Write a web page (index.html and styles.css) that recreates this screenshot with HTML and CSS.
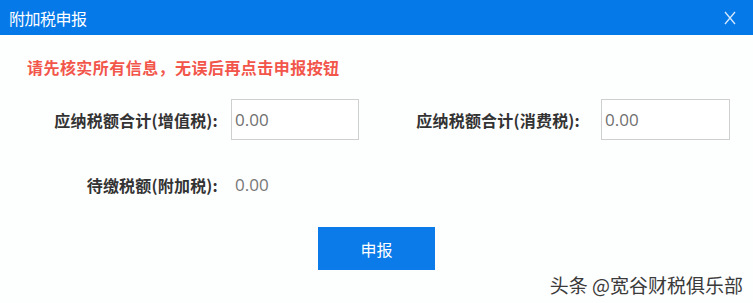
FILE: index.html
```html
<!DOCTYPE html>
<html lang="zh">
<head>
<meta charset="utf-8">
<link rel="stylesheet" href="styles.css">
</head>
<body>
<div class="dialog">
  <div class="header">
    <span class="title">附加税申报</span>
    <svg class="close" width="12" height="14" viewBox="0 0 12 14"><path d="M1 1 L11 13 M11 1 L1 13" stroke="#d4e8ff" stroke-width="1.3" fill="none"/></svg>
  </div>
  <div class="content">
    <div class="notice">请先核实所有信息，无误后再点击申报按钮</div>
    <div class="row">
      <label class="label l1">应纳税额合计(增值税):</label>
      <div class="input i1">0.00</div>
      <label class="label l2">应纳税额合计(消费税):</label>
      <div class="input i2">0.00</div>
    </div>
    <div class="row row2">
      <label class="label l1">待缴税额(附加税):</label>
      <div class="value">0.00</div>
    </div>
    <div class="actions">
      <button class="btn">申报</button>
    </div>
  </div>
  <div class="watermark">头条 @宽谷财税俱乐部</div>
</div>
</body>
</html>
```
FILE: styles.css
```css
* { box-sizing: border-box; }
html, body { margin: 0; padding: 0; background: #fff; }
body {
  width: 753px;
  height: 303px;
  font-family: "Noto Sans CJK SC", "Noto Sans", sans-serif;
  overflow: hidden;
}
.dialog {
  position: relative;
  width: 753px;
  height: 303px;
  background: #fdfefe;
}
.header {
  height: 35px;
  background: #0679e8;
  display: flex;
  align-items: center;
  justify-content: space-between;
  padding: 0 17px 0 9px;
}
.title {
  color: #fff;
  font-size: 16px;
  line-height: 20px;
  letter-spacing: -0.5px;
}
.close { display: block; margin-top: 1px; }
.notice {
  margin: 21px 0 0 27px;
  color: #f2564b;
  font-size: 16px;
  font-weight: 700;
  line-height: 22px;
  letter-spacing: 0.45px;
}
.row {
  display: flex;
  align-items: center;
  margin-top: 21px;
  height: 41px;
}
.label {
  color: #333;
  font-size: 16px;
  font-weight: 700;
  line-height: 22px;
  text-align: right;
  white-space: nowrap;
  letter-spacing: 0.2px;
}
.l1 { width: 218px; margin-right: 13px; }
.l2 { width: 221px; margin-right: 21px; margin-left: 0; }
.input {
  height: 41px;
  border: 1px solid #cfcfcf;
  background: #fff;
  color: #6f6f6f;
  font-family: "Open Sans", "Noto Sans", sans-serif;
  font-size: 17px;
  line-height: 39px;
  padding-left: 3px;
}
.i1 { width: 128px; }
.i2 { width: 129px; }
.row2 { margin-top: 34px; height: 22px; }
.value {
  color: #777;
  font-family: "Open Sans", "Noto Sans", sans-serif;
  font-size: 17px;
  line-height: 22px;
  padding-left: 4px;
}
.actions {
  display: flex;
  justify-content: center;
  margin-top: 31px;
}
.btn {
  width: 117px;
  height: 43px;
  border: none;
  background: #0a7be8;
  color: #fff;
  font-family: "Noto Sans CJK SC", sans-serif;
  font-size: 16px;
  padding: 0;
}
.watermark {
  position: absolute;
  right: 10px;
  bottom: 7px;
  font-size: 19px;
  line-height: 22px;
  color: #3a3a3a;
  text-shadow: 0 0 2px #fff, 0 0 2px #fff;
}
```
